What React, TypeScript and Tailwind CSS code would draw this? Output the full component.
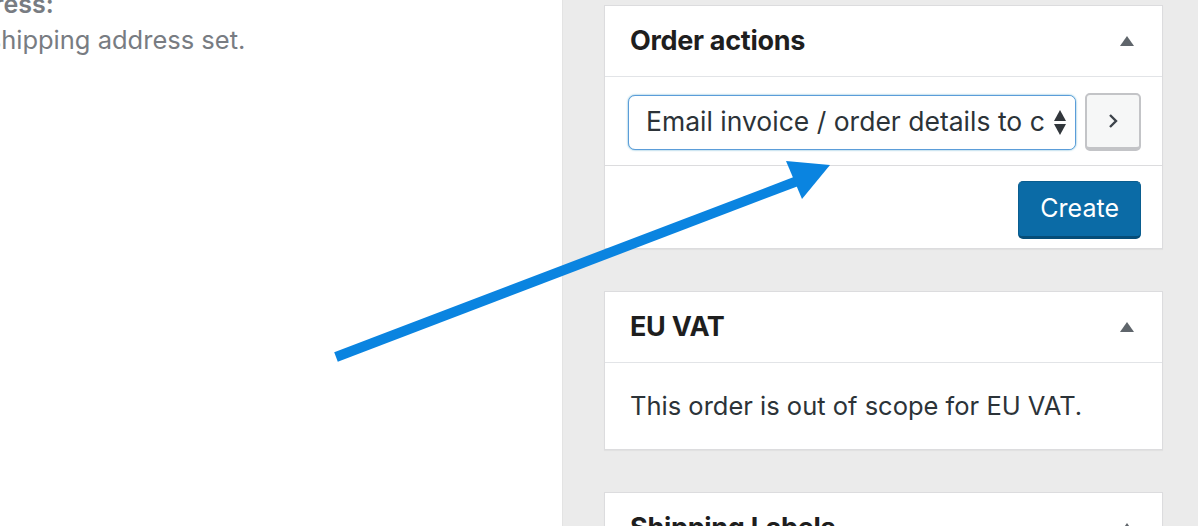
import React from 'react';

const font = { fontFamily: 'Inter, "Noto Sans", "Liberation Sans", sans-serif' };

function Caret() {
  return (
    <svg width="16" height="12" viewBox="0 0 16 12" className="shrink-0">
      <path d="M8 1 L15 11 L1 11 Z" fill="#5f656b" />
    </svg>
  );
}

function Panel({ title, children }: { title: string; children?: React.ReactNode }) {
  return (
    <div className="bg-white border border-[#dcdcde] shadow-[0_1px_1px_rgba(0,0,0,0.04)]">
      <div className="flex items-center justify-between h-[71px] pl-[25px] pr-[27px] border-b border-[#e2e4e7]">
        <h2 className="text-[27px] font-bold text-[#1e1e1e] tracking-[-0.3px]">{title}</h2>
        <Caret />
      </div>
      {children}
    </div>
  );
}

export default function App() {
  return (
    <div className="relative flex h-[526px] w-[1198px] overflow-hidden" style={font}>
      <div className="w-[562px] shrink-0 bg-white overflow-hidden">
        <p className="-mt-[12px] -ml-[55px] text-[25px] font-semibold text-[#787c82] leading-[32px] whitespace-nowrap">Address:</p>
        <p className="mt-[4px] -ml-[54px] text-[25.5px] text-[#787c82] leading-[32px] whitespace-nowrap">No shipping address set.</p>
      </div>

      <div className="w-[636px] shrink-0 min-w-0 bg-[#ebebeb] border-l border-[#e3e3e3] pl-[41px] pr-[35px] pt-[5px] flex flex-col gap-[42px]">
        <Panel title="Order actions">
          <div className="flex items-center gap-[9px] pl-[23px] pr-[21px] pt-[16px] pb-[14px] border-b border-[#dcdcde]">
            <div className="relative flex-1 min-w-0 h-[55px] rounded-[7px] border-[1.5px] border-[#5b9dd9] shadow-[0_0_2px_rgba(30,140,190,0.8)] bg-white flex items-center overflow-hidden">
              <span className="pl-[17px] text-[26.5px] text-[#2c3338] whitespace-nowrap">
                Email invoice / order details to customer
              </span>
              <div className="absolute right-0 top-0 bottom-0 w-[30px] bg-white flex flex-col items-center justify-center gap-[3px]">
                <svg width="12" height="11" viewBox="0 0 12 11"><path d="M6 0 L12 11 L0 11 Z" fill="#32373c" /></svg>
                <svg width="12" height="11" viewBox="0 0 12 11"><path d="M0 0 L12 0 L6 11 Z" fill="#32373c" /></svg>
              </div>
            </div>
            <button className="shrink-0 w-[56px] h-[58px] rounded-[5px] border-[2px] border-[#c3c4c7] border-b-[4px] bg-[#f6f7f7] flex items-center justify-center">
              <svg width="12" height="18" viewBox="0 0 12 18">
                <path d="M3 3 L9 9 L3 15" fill="none" stroke="#3c434a" strokeWidth="2.4" />
              </svg>
            </button>
          </div>
          <div className="flex justify-end px-[21px] pt-[15px] pb-[9px]">
            <button className="h-[58px] px-[21px] rounded-[5px] bg-[#0b6ba6] border border-[#0a5d8f] border-b-[3px] border-b-[#064d78] text-white text-[25px]">
              Create
            </button>
          </div>
        </Panel>

        <Panel title="EU VAT">
          <div className="h-[86px] flex items-center px-[25px]">
            <p className="text-[25.5px] text-[#2c3338] whitespace-nowrap">This order is out of scope for EU VAT.</p>
          </div>
        </Panel>

        <Panel title="Shipping Labels" />
      </div>

      <div className="flex-1 bg-[#ebebeb]" />

      <svg className="absolute inset-0 pointer-events-none" width="1198" height="526" viewBox="0 0 1198 526">
        <line x1="336" y1="357" x2="800" y2="180" stroke="#0a84e0" strokeWidth="10" />
        <path d="M830 165 L786 161 L802 199 Z" fill="#0a84e0" />
      </svg>
    </div>
  );
}
